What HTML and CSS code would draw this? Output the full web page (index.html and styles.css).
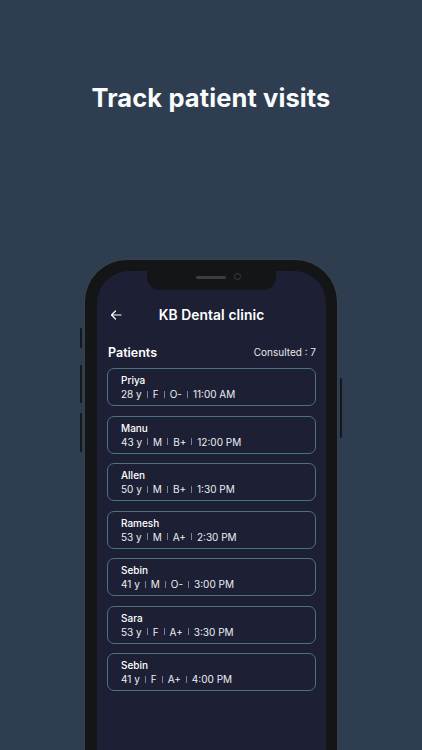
FILE: index.html
```html
<!DOCTYPE html>
<html>
<head>
<meta charset="utf-8">
<link rel="stylesheet" href="styles.css">
</head>
<body>
<div class="page">
  <h1 class="headline">Track patient visits</h1>
  <div class="phone">
    <span class="btn btn-l1"></span>
    <span class="btn btn-l2"></span>
    <span class="btn btn-l3"></span>
    <span class="btn btn-r1"></span>
    <div class="screen">
      <div class="notch"><span class="speaker"></span><span class="camera"></span></div>
      <div class="appbar">
        <svg class="back" width="12" height="10" viewBox="0 0 12 10"><path d="M11 5H1.5M5.5 1 1.5 5l4 4" fill="none" stroke="#fff" stroke-width="1.2" stroke-linecap="round" stroke-linejoin="round"/></svg>
        <div class="apptitle">KB Dental clinic</div>
      </div>
      <div class="section">
        <div class="sec-title">Patients</div>
        <div class="consulted">Consulted : 7</div>
      </div>
      <div class="list">
        <div class="card"><div class="name">Priya</div><div class="meta"><span>28 y</span><i></i><span>F</span><i></i><span>O-</span><i></i><span>11:00 AM</span></div></div>
        <div class="card"><div class="name">Manu</div><div class="meta"><span>43 y</span><i></i><span>M</span><i></i><span>B+</span><i></i><span>12:00 PM</span></div></div>
        <div class="card"><div class="name">Allen</div><div class="meta"><span>50 y</span><i></i><span>M</span><i></i><span>B+</span><i></i><span>1:30 PM</span></div></div>
        <div class="card"><div class="name">Ramesh</div><div class="meta"><span>53 y</span><i></i><span>M</span><i></i><span>A+</span><i></i><span>2:30 PM</span></div></div>
        <div class="card"><div class="name">Sebin</div><div class="meta"><span>41 y</span><i></i><span>M</span><i></i><span>O-</span><i></i><span>3:00 PM</span></div></div>
        <div class="card"><div class="name">Sara</div><div class="meta"><span>53 y</span><i></i><span>F</span><i></i><span>A+</span><i></i><span>3:30 PM</span></div></div>
        <div class="card"><div class="name">Sebin</div><div class="meta"><span>41 y</span><i></i><span>F</span><i></i><span>A+</span><i></i><span>4:00 PM</span></div></div>
      </div>
    </div>
  </div>
</div>
</body>
</html>
```
FILE: styles.css
```css
html, body {
  margin: 0;
  padding: 0;
  background: #2e3d50;
}
body {
  width: 422px;
  height: 750px;
  overflow: hidden;
  font-family: Inter, "Noto Sans", sans-serif;
  color: #fff;
}
.page {
  height: 750px;
  overflow: hidden;
  display: flex;
  flex-direction: column;
  align-items: flex-start;
}
.headline {
  margin: 82px 0 0 0;
  width: 422px;
  text-align: center;
  font-size: 25.5px;
  line-height: 32px;
  font-weight: 700;
  letter-spacing: 0.1px;
  color: #fafbfc;
}
.phone {
  position: relative;
  flex-shrink: 0;
  margin: 146px 0 0 85px;
  width: 229px;
  height: 520px;
  border-style: solid;
  border-color: #141517;
  border-width: 11px 11px 11px 12px;
  border-radius: 42px;
  box-shadow: 0 0 0 1px #3a4048;
  background: #141517;
}
.btn {
  position: absolute;
  width: 2px;
  background: #15171a;
  border-radius: 1px;
}
.btn-l1 { left: -17px; top: 57px; height: 20px; }
.btn-l2 { left: -17px; top: 94px; height: 38px; }
.btn-l3 { left: -17px; top: 142px; height: 39px; }
.btn-r1 { right: -16px; top: 107px; height: 60px; }
.screen {
  position: relative;
  height: 100%;
  background: #1d1f34;
  border-radius: 32px;
  overflow: hidden;
  display: flex;
  flex-direction: column;
  padding: 0 10px 0 10px;
}
.notch {
  position: absolute;
  left: 50px;
  top: 0;
  width: 129px;
  height: 19px;
  background: #141517;
  border-radius: 0 0 13px 13px;
}
.speaker {
  position: absolute;
  left: 49px;
  top: 5px;
  width: 30px;
  height: 3px;
  border-radius: 2px;
  background: #3b3d41;
}
.camera {
  position: absolute;
  left: 87px;
  top: 2px;
  width: 5px;
  height: 5px;
  border-radius: 50%;
  border: 1.5px solid #3b3d41;
}
.appbar {
  margin-top: 35px;
  height: 18px;
  position: relative;
  display: flex;
  align-items: center;
  justify-content: center;
}
.back {
  position: absolute;
  left: 3px;
  top: 4px;
}
.apptitle {
  font-size: 13.8px;
  font-weight: 600;
  letter-spacing: 0.1px;
}
.section {
  margin-top: 20px;
  display: flex;
  justify-content: space-between;
  align-items: center;
  height: 16px;
  padding: 0 0 0 1px;
}
.sec-title {
  font-size: 12.5px;
  font-weight: 600;
}
.consulted {
  font-size: 10px;
  color: #e6e7ec;
  margin-right: 0;
}
.list {
  margin-top: 8px;
  display: flex;
  flex-direction: column;
  gap: 9.5px;
}
.card {
  border: 1px solid #4b7480;
  border-radius: 7px;
  padding: 5px 0 0 13px;
  box-sizing: border-box;
  height: 38px;
  display: flex;
  flex-direction: column;
}
.name {
  font-size: 10px;
  font-weight: 500;
  line-height: 13px;
}
.meta {
  display: flex;
  align-items: center;
  font-size: 10px;
  line-height: 14px;
  color: #eceef2;
  margin-top: 0;
}
.meta i {
  display: inline-block;
  width: 1px;
  height: 7px;
  background: #7c8090;
  margin: 0 5px;
}
```
